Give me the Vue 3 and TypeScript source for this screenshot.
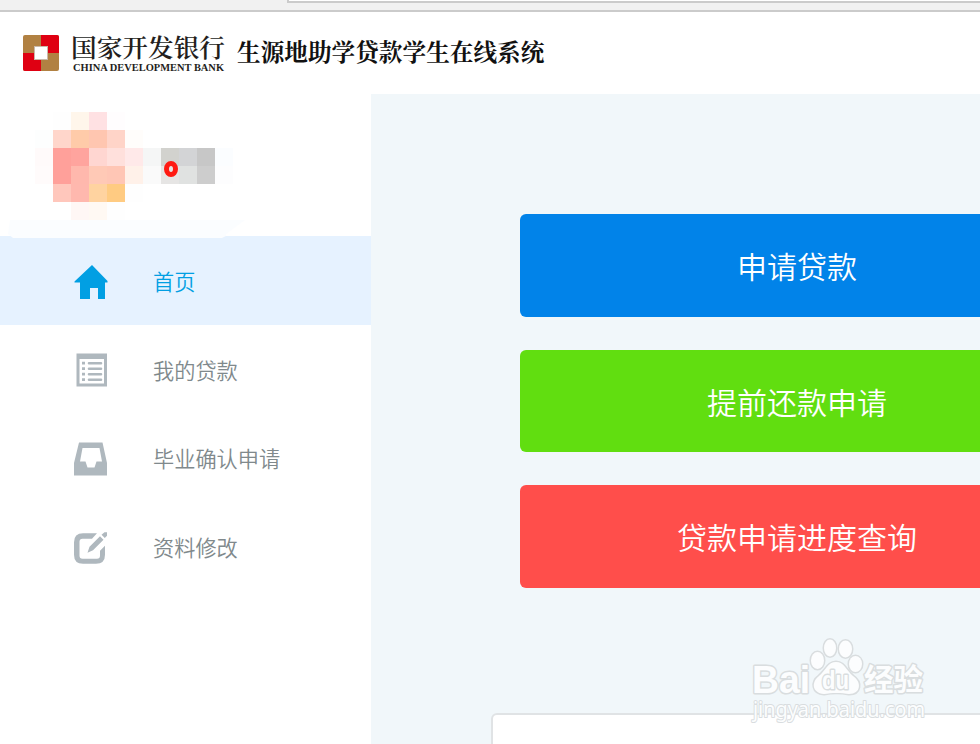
<script setup lang="ts">
interface MenuItem {
  label: string
  icon: 'home' | 'list' | 'inbox' | 'edit'
  active?: boolean
}

const menu: MenuItem[] = [
  { label: '首页', icon: 'home', active: true },
  { label: '我的贷款', icon: 'list' },
  { label: '毕业确认申请', icon: 'inbox' },
  { label: '资料修改', icon: 'edit' },
]

const actions = [
  { label: '申请贷款', tone: 'blue' },
  { label: '提前还款申请', tone: 'green' },
  { label: '贷款申请进度查询', tone: 'red' },
]

// Pixelated user block: 11 columns by 6 rows of 18px cells
const n = 'transparent'
const mosaic: string[][] = [
  [n, '#fefefe', '#fff6eb', '#ffe1e3', '#fffdfe', n, n, n, n, n, n],
  ['#fdfefe', '#ffd6cb', '#ffcba9', '#ffc6b0', '#ffd4c8', '#fffdfb', n, n, n, n, n],
  ['#fffafa', '#ffa09a', '#ffa49e', '#ffd6d1', '#ffe0dc', '#ffe9e9', '#f5f6f6', '#d2d2ce', '#d3d4d6', '#c7c7c7', '#fbfdff'],
  ['#fffbfb', '#ffa09a', '#ffb8ad', '#ffc9b6', '#ffc6b5', '#fff1e9', '#fafafa', '#e6e5e4', '#e0e2e1', '#cdcdcd', '#fdfdfe'],
  [n, '#ffc7bc', '#ffb8ae', '#ffd3a0', '#ffcb82', '#fefefe', n, n, n, n, n],
  [n, n, '#fff7f5', '#fff9f3', '#fefefe', n, n, n, n, n, n],
]
</script>

<template>
  <div class="page">
    <div class="browser-bar"><div class="address"></div></div>
    <header class="header">
      <svg class="logo" viewBox="0 0 36 36">
        <rect width="36" height="36" rx="2" fill="#b18142" />
        <path d="M18 0H34a2 2 0 0 1 2 2V18H18ZM0 18H18V36H2a2 2 0 0 1-2-2Z" fill="#df0012" />
        <rect x="11.500" y="11.500" width="13" height="13" fill="#fff" stroke="#c9b9aa" />
      </svg>
      <div class="bank">
        <svg class="bank-cn" viewBox="0 0 154 30">
          <text x="-1" y="24.500" textLength="154" lengthAdjust="spacingAndGlyphs">国家开发银行</text>
        </svg>
        <svg class="bank-en" viewBox="0 0 154 12">
          <text x="1" y="9" textLength="151" lengthAdjust="spacingAndGlyphs">CHINA DEVELOPMENT BANK</text>
        </svg>
      </div>
      <h1 class="title">生源地助学贷款学生在线系统</h1>
    </header>
    <div class="body">
      <aside class="sidebar">
        <div class="profile">
          <div class="mosaic">
            <template v-for="(row, r) in mosaic" :key="r">
              <i v-for="(color, c) in row" :key="c" :style="{ background: color }"></i>
            </template>
            <span class="ring"></span>
          </div>
          <svg class="brush" viewBox="0 0 245 18"><path d="M10 0H245L226 14V16L222 18H13L8 14Z" fill="#fbfdff" /></svg>
        </div>
        <nav>
          <a v-for="item in menu" :key="item.icon" class="item" :class="{ active: item.active }">
            <svg class="icon" viewBox="0 0 34 34" fill="currentColor">
              <path v-if="item.icon === 'home'" d="M18 0L33.500 16V17.500H31V34H24V23H16V34H6V17.500H0.500V16.500Z" />
              <g v-else-if="item.icon === 'list'">
                <path fill-rule="evenodd" d="M2.500 .5H33V33.500H2.500ZM5.500 6V30.500H30V6Z" />
                <path d="M8 8.800h3v2.800H8zM8 14.300h3V17H8zM8 19.800h3v2.800H8zM8 25.300h3v2.800H8z" />
                <path d="M15 10.200H27M15 15.700H27M15 21.200H27M15 26.700H27" stroke="currentColor" stroke-width="2.600" stroke-linecap="round" />
              </g>
              <path v-else-if="item.icon === 'inbox'" fill-rule="evenodd" d="M5 .5H28.500L33 21V33.500H0V21ZM8.500 6L6 19.500H11.500L13.500 25.500H20.500L22.500 19.500H28L25.500 6Z" />
              <g v-else transform="translate(0 1.700)">
                <path d="M23 1.500H9Q0 1.500 0 10.500V23Q0 32 9 32H22Q31 32 31 23V14L26 19V24Q26 27 23 27H8.500Q5.500 27 5.500 24V10Q5.500 7 8.500 7H18Z" />
                <path d="M13.500 21L15.500 15L26 4.500L29.500 8L19 18.500ZM27.500 3L30.500 .5H33V4L30.800 6.300Z" />
              </g>
            </svg>
            <span class="label">{{ item.label }}</span>
          </a>
        </nav>
      </aside>
      <main class="content">
        <div class="actions">
          <button v-for="a in actions" :key="a.tone" class="action" :class="a.tone">{{ a.label }}</button>
        </div>
        <section class="panel"></section>
      </main>
    </div>
    <svg class="watermark" viewBox="0 0 190 96">
      <g fill="#fcfdfe" stroke="#d9dddf" stroke-width="3" paint-order="stroke" stroke-linejoin="round">
        <text x="7" y="58" class="wm-brand" textLength="58" lengthAdjust="spacingAndGlyphs">Bai</text>
        <ellipse cx="72.500" cy="25.500" rx="6.500" ry="8.500" />
        <ellipse cx="85" cy="13" rx="6" ry="8.500" />
        <ellipse cx="100.500" cy="14" rx="6.500" ry="8.500" />
        <ellipse cx="110.500" cy="29" rx="6.500" ry="8" />
        <path d="M91 27C83 27 81 35 74 41C66 47 67 58 79 59C86 57.500 97 57.500 104 59C116 59 117 47 108 41C101 35 99 27 91 27Z" />
        <text x="119" y="55" class="wm-cn" textLength="59" lengthAdjust="spacingAndGlyphs">经验</text>
        <text x="8" y="82" class="wm-url" textLength="172" lengthAdjust="spacingAndGlyphs">jingyan.baidu.com</text>
        <text x="77" y="54" class="wm-du" textLength="27" lengthAdjust="spacingAndGlyphs">du</text>
      </g>
    </svg>
  </div>
</template>

<style>
body {
  margin: 0;
  overflow: hidden;
}
</style>

<style scoped>
.page {
  position: relative;
  display: flex;
  flex-direction: column;
  width: 980px;
  height: 744px;
  overflow: hidden;
  background: #fff;
  font-family: "Noto Sans CJK SC", sans-serif;
}
.browser-bar {
  box-sizing: border-box;
  flex: none;
  height: 12px;
  padding-left: 287px;
  background: #f1f1f1;
  border-bottom: 2px solid #cbcbcb;
}
.address {
  box-sizing: border-box;
  height: 3px;
  background: #fff;
  border-left: 2px solid #cbcbcb;
  border-bottom: 2px solid #cbcbcb;
}
.header {
  display: flex;
  flex: none;
  height: 82px;
  padding-left: 23px;
  box-sizing: border-box;
}
.logo {
  width: 36px;
  height: 36px;
  margin-top: 23px;
}
.bank {
  display: flex;
  flex-direction: column;
  width: 154px;
  margin: 20px 0 0 13px;
}
.bank-cn {
  width: 154px;
  height: 30px;
  overflow: visible;
  font: 600 25px "Noto Serif CJK SC", "Noto Sans CJK SC", serif;
  fill: #241e1c;
}
.bank-en {
  width: 154px;
  height: 12px;
  font: bold 10.500px "Liberation Serif", serif;
  fill: #241e1c;
}
.title {
  margin: 22px 0 0 11px;
  font: bold 23.650px/34px "Noto Serif CJK SC", "Noto Sans CJK SC", serif;
  color: #111;
  white-space: nowrap;
}
.body {
  display: flex;
  flex: 1;
  min-height: 0;
}
.sidebar {
  flex: none;
  width: 371px;
}
.profile {
  display: flex;
  flex-direction: column;
  height: 142px;
  padding-top: 18px;
  box-sizing: border-box;
}
.mosaic {
  position: relative;
  display: grid;
  grid-template-columns: repeat(11, 18px);
  grid-auto-rows: 18px;
  margin-left: 35px;
}
.ring {
  position: absolute;
  left: 129px;
  top: 49px;
  box-sizing: border-box;
  width: 14px;
  height: 16px;
  border: 5px solid #ff1a12;
  border-radius: 50%;
  background: #e6e5e4;
}
.brush {
  position: relative;
  flex: none;
  width: 245px;
  height: 18px;
}
.item {
  display: flex;
  align-items: center;
  box-sizing: border-box;
  height: 88.500px;
  padding: 3px 0 0 74px;
  color: #80898c;
  font-size: 21.200px;
  font-weight: 350;
}
.item.active {
  background: #e6f2ff;
  color: #019fe3;
}
.icon {
  width: 34px;
  height: 34px;
  margin-right: 45px;
  overflow: visible;
  color: #afb8be;
}
.label {
  padding-bottom: 2px;
}
.active .icon {
  color: #019fe3;
}
.content {
  flex: 1;
  min-width: 0;
  overflow: hidden;
  background: #f1f7fa;
}
.actions {
  display: flex;
  flex-direction: column;
  gap: 33px;
  width: 556px;
  margin: 120px 0 0 149px;
}
.action {
  height: 102.700px;
  padding: 0 2px 1px 0;
  border: 0;
  border-radius: 6px;
  color: #fff;
  font-family: inherit;
  font-size: 30px;
  font-weight: 350;
}
.blue {
  background: #0183e9;
}
.green {
  background: #61de10;
}
.red {
  background: #ff4e4b;
}
.panel {
  width: 620px;
  height: 120px;
  margin: 125px 0 0 120px;
  border: 2px solid #e0e3e5;
  border-radius: 6px;
  background: #fff;
}
.watermark {
  position: absolute;
  left: 745px;
  top: 635px;
  width: 190px;
  height: 96px;
}
.wm-brand {
  font: bold 39px "Liberation Sans", sans-serif;
}
.wm-cn {
  font: bold 30px "Noto Sans CJK SC", sans-serif;
}
.wm-url {
  font: 21px "Noto Sans", sans-serif;
  stroke-width: 2px;
}
.wm-du {
  font: bold 25px "Liberation Sans", sans-serif;
}
</style>
